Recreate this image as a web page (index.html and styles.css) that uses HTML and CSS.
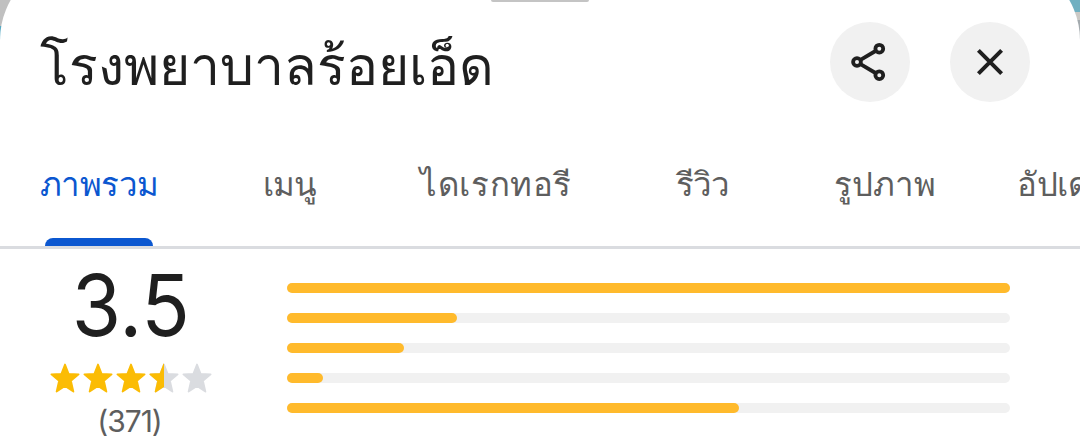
FILE: index.html
```
<!DOCTYPE html>
<html lang="th">
    <head>
        <meta charset="UTF-8" />
        <meta name="viewport" content="width=device-width, initial-scale=1.0" />
        <title>โรงพยาบาลร้อยเอ็ด</title>
        <link rel="stylesheet" href="styles.css">
    </head>
    <body>
        <div class="page">
            <svg class="map" width="1080" height="60" viewBox="0 0 1080 60">
                <rect width="540" height="26" fill="#c0c0c0" />
                <rect y="26" width="540" height="34" fill="#58a9c2" />
                <rect x="540" width="540" height="12" fill="#70b0c1" />
                <rect x="540" y="12" width="540" height="8" fill="#cbc9c5" />
                <rect x="540" y="20" width="540" height="40" fill="#a3aaae" />
            </svg>
            <div class="sheet">
                <div class="handle"></div>

                <div class="header">
                    <h1>โรงพยาบาลร้อยเอ็ด</h1>
                    <button class="icon-button" aria-label="แชร์">
                        <svg width="80" height="80" viewBox="0 0 80 80" fill="none" stroke="#1f1f1f" stroke-width="3.8">
                            <path d="M30.5 37.8L45.5 29M30.5 42.2L45.5 51" />
                            <circle cx="27" cy="40" r="3.9" />
                            <circle cx="49.3" cy="26.7" r="3.9" />
                            <circle cx="49.3" cy="53.2" r="3.9" />
                        </svg>
                    </button>
                    <button class="icon-button" aria-label="ปิด">
                        <svg width="80" height="80" viewBox="0 0 80 80" fill="none" stroke="#1f1f1f" stroke-width="4">
                            <path d="M28.4 28.4L51.6 51.6M51.6 28.4L28.4 51.6" />
                        </svg>
                    </button>
                </div>

                <div class="tabs">
                    <div class="tab active">ภาพรวม</div>
                    <div class="tab narrow">เมนู</div>
                    <div class="tab wide">ไดเรกทอรี</div>
                    <div class="tab narrow">รีวิว</div>
                    <div class="tab">รูปภาพ</div>
                    <div class="tab last">อัปเดต</div>
                </div>

                <div class="rating">
                    <div class="summary">
                        <div class="score">3.5</div>
                        <svg class="stars" width="162" height="31" viewBox="0 0 162 31">
                            <defs>
                                <path id="star" d="M15 1.5L18.6 10.8L28.6 11.4L20.9 17.8L23.4 28.6L15 23L6.6 28.6L9.1 17.8L1.4 11.4L11.4 10.8Z" stroke-width="1.8" stroke-linejoin="round" />
                                <clipPath id="half"><rect width="15" height="31" /></clipPath>
                            </defs>
                            <g class="star-on">
                                <use href="#star" />
                                <use href="#star" x="33" />
                                <use href="#star" x="66" />
                            </g>
                            <g class="star-off">
                                <use href="#star" x="99" />
                                <use href="#star" x="132" />
                            </g>
                            <g class="star-on" transform="translate(99 0)">
                                <use href="#star" clip-path="url(#half)" />
                            </g>
                        </svg>
                        <div class="count">(371)</div>
                    </div>
                    <div class="bars">
                        <div class="bar"><div class="fill" style="width: 100%"></div></div>
                        <div class="bar"><div class="fill" style="width: 23.5%"></div></div>
                        <div class="bar"><div class="fill" style="width: 16.2%"></div></div>
                        <div class="bar"><div class="fill" style="width: 5%"></div></div>
                        <div class="bar"><div class="fill" style="width: 62.5%"></div></div>
                    </div>
                </div>
            </div>
        </div>
    </body>
</html>
```
FILE: styles.css
```
* {
    box-sizing: border-box;
}
body {
    margin: 0;
    font-family: Roboto, "Liberation Sans", sans-serif;
    color: #1f1f1f;
}
.page {
    position: relative;
    width: 1080px;
    height: 448px;
    overflow: hidden;
}
.map {
    position: absolute;
    top: 0;
    left: 0;
}
.sheet {
    position: relative;
    height: 488px;
    margin-top: -40px;
    padding-top: 40px;
    background-color: #fff;
    border-radius: 80px 80px 0 0;
    overflow: hidden;
}
.handle {
    width: 98px;
    height: 2px;
    margin: 0 auto;
    background-color: #c4c4c4;
    border-radius: 0 0 4px 4px;
}
.header {
    display: flex;
    align-items: center;
    gap: 40px;
    height: 120px;
    padding: 0 50px 0 40px;
}
h1 {
    flex: 1;
    margin: 10px 0 0;
    font-size: 53.5px;
    font-weight: normal;
    line-height: 70px;
    white-space: nowrap;
}
.icon-button {
    width: 80px;
    height: 80px;
    padding: 0;
    border: none;
    border-radius: 50%;
    background-color: #f1f1f1;
}
.icon-button svg {
    display: block;
}
.tabs {
    display: flex;
    gap: 104.5px;
    height: 127px;
    padding: 40px 0 0 40px;
    border-bottom: 3px solid #dadce0;
    overflow: hidden;
}
.tab {
    display: flex;
    flex-direction: column;
    justify-content: space-between;
    flex-shrink: 0;
    font-size: 33px;
    line-height: 45px;
    color: #5e5e5e;
    white-space: nowrap;
}
.tab.active {
    letter-spacing: -0.6px;
    color: #0b57d0;
}
.tab.active::after {
    content: "";
    height: 8px;
    margin: 0 5px;
    background-color: #0b57d0;
    border-radius: 8px 8px 0 0;
}
.tab.narrow {
    letter-spacing: -1.1px;
}
.tab.wide {
    letter-spacing: 0.6px;
}
.tab.last {
    margin-left: -23px;
    letter-spacing: -0.4px;
}
.rating {
    display: flex;
}
.summary {
    display: flex;
    flex-direction: column;
    align-items: center;
    width: 162px;
    margin-left: 50px;
    font-family: Inter, Roboto, sans-serif;
}
.score {
    height: 114px;
    font-size: 85px;
    line-height: 114px;
    transform: scaleX(0.94);
}
.stars {
    display: block;
}
.star-on {
    fill: #fbbc04;
    stroke: #fbbc04;
}
.star-off {
    fill: #dadce0;
    stroke: #dadce0;
}
.count {
    margin: 7px 3px 0 0;
    font-size: 30px;
    line-height: 40px;
    letter-spacing: -1px;
    color: #5e5e5e;
}
.bars {
    display: flex;
    flex-direction: column;
    gap: 20px;
    width: 723px;
    margin: 34px 0 0 75px;
}
.bar {
    height: 10px;
    background-color: #f1f1f1;
    border-radius: 5px;
}
.fill {
    height: 10px;
    background-color: #ffba2c;
    border-radius: 5px;
}
```
